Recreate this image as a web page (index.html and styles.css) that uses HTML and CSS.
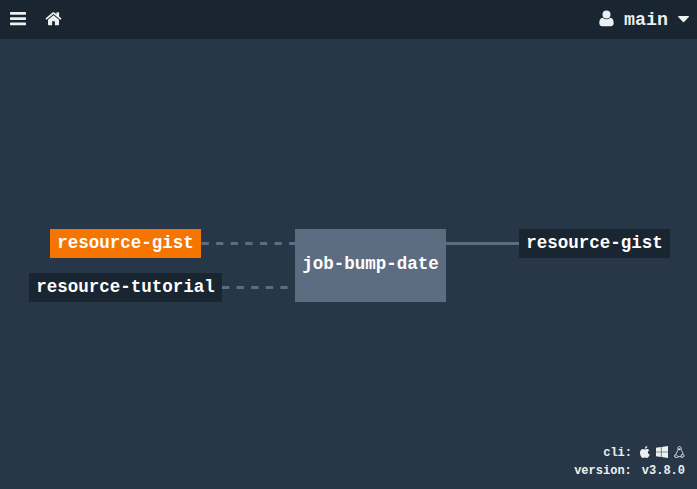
FILE: index.html
```html
<!DOCTYPE html>
<html lang="en">
<head>
<meta charset="utf-8">
<title>main</title>
<link rel="stylesheet" href="styles.css">
</head>
<body>
<header class="topbar">
  <nav class="nav">
    <svg class="bars" width="16" height="14" viewBox="0 0 16 14"><path d="M.7 0h14.600q.7 0 .7.7v1.400q0 .7-.7.7H.7Q0 2.800 0 2.100V.7Q0 0 .7 0zM.7 5.200h14.600q.7 0 .7.7v1.400q0 .7-.7.7H.7Q0 8 0 7.300V5.900q0-.7.7-.7zM.7 10.400h14.600q.7 0 .7.7v1.400q0 .7-.7.7H.7q-.7 0-.7-.7v-1.400q0-.7.7-.7z"/></svg>
    <svg class="home" width="17" height="14" viewBox="0 0 17 14"><path d="M8.500 3.200 14 7.800v4.700q0 .7-.7.7H9.900V9.200H7.100v4H3.700q-.7 0-.7-.7V7.800zM7.500.6q1-.8 2 0l1.900 1.600V.7q0-.4.4-.4h1.900q.4 0 .4.400v3.800l2.200 1.800q.3.300 0 .6l-.6.700q-.3.300-.6 0L8.500 2 1.900 7.600q-.3.300-.6 0l-.6-.7q-.3-.3 0-.6z"/></svg>
  </nav>
  <div class="team">
    <svg class="user" width="15" height="17" viewBox="0 0 15 17"><path d="M3.800 7.800q1.600 1.500 3.700 1.500t3.700-1.500c2.700.2 3.500 2.900 3.500 5.300 0 1.900-1 3.100-2.800 3.100H3.100C1.300 16.200.3 15 .3 13.100c0-2.400.8-5.100 3.500-5.300z"/><circle cx="7.500" cy="4.400" r="4"/></svg>
    <span class="name">main</span>
    <svg class="caret" width="11" height="7" viewBox="0 0 11 7"><path d="M.5 0h10q.8.100.3.900L6 6q-.5.500-1 0L.2.900Q-.3.100.5 0z"/></svg>
  </div>
</header>
<main class="pipeline">
  <svg class="edges" width="697" height="450" viewBox="0 0 697 450">
    <path class="dashed" d="M201.500 204.500H295M222 248.500H295"/>
    <path d="M446 204.500H519"/>
  </svg>
  <div class="node gist-in">resource-gist</div>
  <div class="node tutorial">resource-tutorial</div>
  <div class="node job">job-bump-date</div>
  <div class="node gist-out">resource-gist</div>
</main>
<footer class="info">
  <div class="row cli"><span>cli:</span>
    <svg width="10" height="12" viewBox="0 0 10 12"><path d="M7.300 0c.1 1.500-1 2.700-2.400 2.700C4.800 1.300 6 .1 7.300 0zM5 3.500c.7 0 1.200-.5 2.200-.5.8 0 1.600.4 2.100 1.200C7.300 5.300 7.600 7.900 9.800 8.600 9.200 10.200 8.200 12 7 12c-.8 0-1.100-.5-2-.5s-1.200.5-2 .5C1.500 12 0 9.100 0 6.800 0 4.500 1.400 3 2.900 3c.9 0 1.500.5 2.100.5z"/></svg>
    <svg width="12" height="12" viewBox="0 0 12 12"><path d="M0 1.700 4.900 1v4.700H0zM5.500.9 12 0v5.700H5.500zM0 6.300h4.900V11L0 10.300zM5.500 6.300H12V12l-6.500-.9z"/></svg>
    <svg width="11" height="12" viewBox="0 0 11 12"><path class="tux" d="M4 3.500C3.900 1.400 4 .5 5.500.5S7.100 1.700 7.200 3.500C7.400 4.800 9 6.300 9 8.300M4 3.500C4 5 2.200 6.500 2.100 8.500M.6 9.200l1.400-.6 2 2-.6 1-2.700-.6zM7.300 8.800l1.900-.4 1.200 1.700-2.500 1.500-.9-.5zM4 10.700h3"/><path d="M4.300 2.400h2.300v1.200l-1.200.7-1.100-.6z"/></svg>
  </div>
  <div class="row"><span>version:</span><span class="number">v3.8.0</span></div>
</footer>
</body>
</html>
```

FILE: styles.css
```css
* { box-sizing: border-box; }
body {
  margin: 0;
  height: 489px;
  overflow: hidden;
  background: #273748;
  color: #ecf0f1;
  font-family: "Courier New", "Liberation Mono", monospace;
  font-weight: 700;
}
svg { display: block; fill: #ecf0f1; flex: none; }
.topbar {
  height: 39px;
  display: flex;
  justify-content: space-between;
  background: #192530;
}
.nav { display: flex; align-items: flex-start; gap: 19px; padding: 12px 0 0 10px; }
.team { display: flex; align-items: center; padding: 0 8px 1px 0; font-size: 18.3px; }
.user { margin-bottom: 2px; }
.name { margin: 1px 10px 0 10px; }
.pipeline { position: relative; height: 450px; }
.edges { position: absolute; left: 0; top: 0; }
.edges path { fill: none; stroke: #5c6d81; stroke-width: 3; }
.edges .dashed { stroke-dasharray: 7.300 7.300; }
.node {
  position: absolute;
  height: 29px;
  line-height: 28px;
  text-align: center;
  white-space: nowrap;
  font-size: 17.5px;
  color: #fff;
  background: #192530;
}
.gist-in { left: 50px; top: 190px; width: 151px; background: #f57500; }
.tutorial { left: 29px; top: 234px; width: 193px; }
.job { left: 295px; top: 190px; width: 151px; height: 73px; line-height: 70px; background: #5c6d81; }
.gist-out { left: 519px; top: 190px; width: 151px; }
.info {
  position: absolute;
  right: 12px;
  bottom: 10px;
  font-size: 12px;
}
.row { display: flex; justify-content: flex-end; align-items: center; height: 18px; }
.row span { padding-top: 2px; }
.cli { gap: 6px; }
.cli span { margin-right: 2px; }
.number { margin-left: 10px; }
.tux { fill: none; stroke: #ecf0f1; stroke-width: .85; }
```
